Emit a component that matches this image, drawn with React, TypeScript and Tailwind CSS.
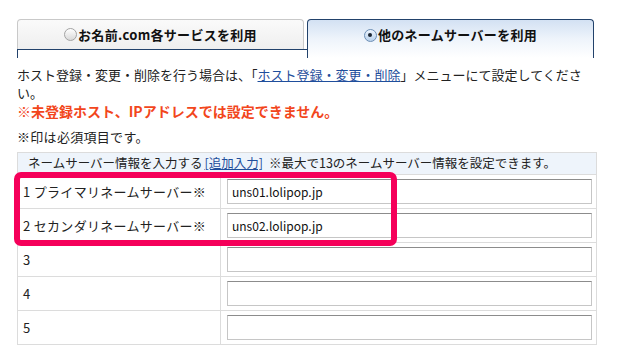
import React from 'react';

const rows = [
  { label: '1 プライマリネームサーバー※', value: 'uns01.lolipop.jp' },
  { label: '2 セカンダリネームサーバー※', value: 'uns02.lolipop.jp' },
  { label: '3', value: '' },
  { label: '4', value: '' },
  { label: '5', value: '' },
];

const Radio: React.FC<{ checked?: boolean }> = ({ checked }) =>
  checked ? (
    <span className="w-[13px] h-[13px] rounded-full border border-[#6d8fb5] bg-gradient-to-b from-[#eef5fd] to-[#b8d1ec] flex items-center justify-center mr-[1px]">
      <span className="w-[4px] h-[4px] rounded-full bg-[#1b2633]" />
    </span>
  ) : (
    <span className="w-[13px] h-[13px] rounded-full border border-[#a3a3a3] bg-gradient-to-b from-white to-[#d9d9d9] mr-[1px]" />
  );

const App: React.FC = () => {
  return (
    <div className="w-[629px] h-[361px] overflow-hidden bg-white text-[#222] font-['Noto_Sans_CJK_JP','Noto_Sans',sans-serif]">
      <div className="pl-[17px] pt-[19px]">
        {/* tabs */}
        <div className="flex items-start w-[578px]">
          <div className="flex flex-col">
            <div className="w-[287px] h-[30px] border border-b-0 border-[#c9c9c9] rounded-t-[4px] bg-gradient-to-b from-[#fafafa] to-[#efefef] flex items-center justify-center text-[13px] font-bold text-[#111] tracking-[0.3px]">
              <Radio />
              <span>お名前.com各サービスを利用</span>
            </div>
            <div className="w-[291px] h-[9px] border-t border-l border-[#22426b]" />
          </div>
          <div className="w-[287px] h-[39px] border border-b-0 border-[#22426b] rounded-t-[4px] bg-gradient-to-b from-[#d3e1f3] via-[#eef4fb] to-white ml-[-1px]">
            <div className="h-[30px] flex items-center justify-center text-[13px] font-bold text-[#111] tracking-[0.3px]">
              <Radio checked />
              <span>他のネームサーバーを利用</span>
            </div>
          </div>
        </div>

        {/* notes */}
        <p className="mt-[8px] w-[571px] text-[13px] leading-[18px]">
          ホスト登録・変更・削除を行う場合は、「<a className="text-[#1f4e9c] underline">ホスト登録・変更・削除</a>」メニューにて設定してください。
        </p>
        <p className="text-[14px] leading-[18px] font-bold text-[#f2461c]">
          ※未登録ホスト、IPアドレスでは設定できません。
        </p>
        <p className="mt-[8px] text-[13px] leading-[18px] tracking-[0.3px]">※印は必須項目です。</p>

        {/* table */}
        <div className="relative mt-[6px] w-[580px] border border-[#dcdcdc]">
          <div className="h-[21px] bg-[#eef4fb] flex items-center pl-[10px] text-[12.5px] text-[#222]">
            ネームサーバー情報を入力する
            <a className="text-[#1f4e9c] underline ml-[2px]">[追加入力]</a>
            <span className="ml-[6px]">※最大で13のネームサーバー情報を設定できます。</span>
          </div>
          {rows.map((r) => (
            <div key={r.label} className="flex h-[34px] border-t border-[#dcdcdc]">
              <div className="w-[203px] border-r border-[#dcdcdc] flex items-center pl-[5px] text-[13px] tracking-[0.3px]">
                {r.label}
              </div>
              <div className="flex-1 flex items-center pl-[6px]">
                <div className="w-[365px] h-[25px] border border-[#c6c6c6] border-t-[#8c8c8c] bg-white flex items-center pl-[4px] text-[12px] text-[#111]">
                  {r.value}
                </div>
              </div>
            </div>
          ))}
          {/* highlight */}
          <div className="absolute left-[-4px] top-[19px] w-[383px] h-[74px] border-[6px] border-[#f5005a] rounded-[7px] pointer-events-none" />
        </div>
      </div>
    </div>
  );
};

export default App;
